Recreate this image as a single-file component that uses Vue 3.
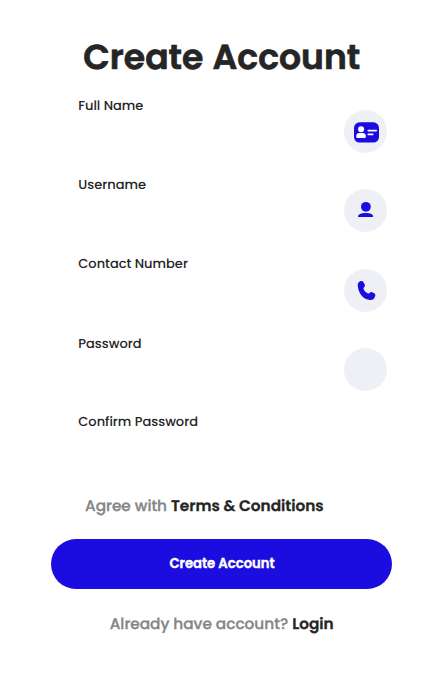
<script setup>
const fields = [
  { id: 'name', label: 'Full Name', icon: 'card' },
  { id: 'username', label: 'Username', icon: 'user' },
  { id: 'contact', label: 'Contact Number', icon: 'phone' },
  { id: 'password', label: 'Password', icon: 'blank' },
  { id: 'confirm', label: 'Confirm Password', icon: null },
]
</script>

<template>
  <main class="page">
    <h1 class="title"><span>Create Account</span></h1>
    <form class="form" @submit.prevent>
      <div v-for="f in fields" :key="f.id" class="field" :class="f.id">
        <span class="label">{{ f.label }}</span>
        <span v-if="f.icon" class="badge">
          <svg v-if="f.icon === 'card'" width="43" height="43" viewBox="0 0 43 43">
            <rect x="10" y="12.3" width="25" height="20.3" rx="5.5" fill="#1b0de0" />
            <circle cx="17.1" cy="19.2" r="3" fill="#fff" />
            <path d="M12.2 26.2c0-2.2 1.5-3.1 3.2-3.1h3.3c1.8 0 3.2.9 3.2 3.1 0 1.3-.7 1.9-1.7 1.9h-6.3c-1 0-1.7-.6-1.7-1.9z" fill="#fff" />
            <path d="M24.4 20.6h7.7M24.4 24.4h4.2" stroke="#fff" stroke-width="1.9" stroke-linecap="round" />
          </svg>
          <svg v-else-if="f.icon === 'user'" width="43" height="43" viewBox="0 0 43 43">
            <circle cx="21.9" cy="17.8" r="4.9" fill="#1b0de0" />
            <path d="M14 28c0-3 3.2-4 7.8-4s7.4 1 7.4 4z" fill="#1b0de0" />
          </svg>
          <svg v-else-if="f.icon === 'phone'" width="43" height="43" viewBox="0 0 43 43">
            <path d="M16.3 12.3c1.5-.6 2.5-.2 3.2 1l1.1 2c.7 1.2.4 2.1-.5 2.9-.7.6-.8 1.2-.4 2.1.8 1.8 2.2 3.2 4.1 4 .8.4 1.3.2 1.8-.4.8-1 1.8-1.1 2.9-.5l1.7.9c1.2.7 1.4 1.6.9 3-.8 2.8-2.7 4-5.1 3.8C19.5 30.6 14.6 24.8 13.8 17.3c-.3-2.4.4-4.2 2.5-5z" fill="#1b0de0" />
          </svg>
        </span>
      </div>
      <p class="terms"><span class="muted">Agree with</span><strong>Terms &amp; Conditions</strong></p>
      <button class="submit" type="submit"><span>Create Account</span></button>
    </form>
    <p class="login"><span class="muted">Already have account?</span><strong>Login</strong></p>
  </main>
</template>

<style>
body {
  background: #fff;
}
</style>

<style scoped>
.page {
  box-sizing: border-box;
  width: 445px;
  height: 673px;
  padding-top: 37px;
  overflow: hidden;
  font-family: Poppins, Inter, "Open Sans", sans-serif;
  color: #252525;
  white-space: nowrap;
  text-rendering: geometricPrecision;
}
.title {
  margin: 0 0 17px 83.3px;
  font-size: 34.6px;
  line-height: 43px;
  font-weight: 600;
  word-spacing: 1px;
  -webkit-text-stroke: 0.7px currentColor;
}
.field {
  display: flex;
  justify-content: space-between;
  height: 79.3px;
  margin: 0 58px 0 78.3px;
}
.field.confirm {
  height: 78px;
  margin-top: -1px;
}
.label {
  font-size: 13px;
  line-height: 17px;
  font-weight: 500;
}
.contact .label {
  line-height: 16px;
}
.badge {
  width: 43px;
  height: 43px;
  margin-top: 13px;
  border-radius: 50%;
  background: #eff0f5;
}
.badge svg {
  display: block;
}
.terms,
.login {
  display: flex;
  gap: 4px;
  margin: 0;
  font-size: 15.3px;
  line-height: 20px;
  -webkit-text-stroke: 0.3px currentColor;
}
.terms {
  margin: 6px 0 21.4px 85px;
}
.muted {
  color: #858585;
  font-weight: 500;
}
strong {
  font-weight: 600;
}
.submit {
  display: flex;
  align-items: center;
  justify-content: center;
  width: 340.5px;
  height: 50.2px;
  margin: 0 0 26px 51.3px;
  padding: 1px 0 0 1px;
  border: 0;
  border-radius: 26px;
  background: #1b0de0;
  color: #fff;
  font: inherit;
  font-size: 13.2px;
  font-weight: 600;
  -webkit-text-stroke: 0.4px currentColor;
}
.login {
  margin-left: 109.7px;
}
</style>
